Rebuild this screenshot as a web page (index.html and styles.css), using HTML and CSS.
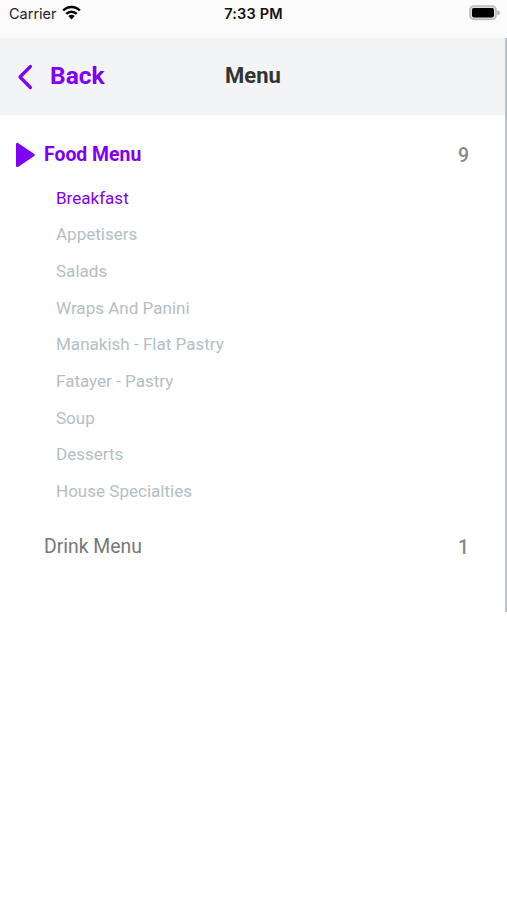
FILE: index.html
```html
<!DOCTYPE html>
<html lang="en">
<head>
<meta charset="utf-8">
<title>Menu</title>
<link rel="stylesheet" href="styles.css">
</head>
<body>
<div class="status">
  <div class="carrier"><span>Carrier</span>
    <svg class="wifi" width="19" height="15" viewBox="0 0 19 15" fill="none" stroke="#000" stroke-width="2.5"><path d="M1.2 5.5C5.8.8 13.2.8 17.8 5.5M4.3 8.8c2.9-2.9 7.5-2.9 10.4 0"/><path d="M6.3 11.1Q9.5 8.5 12.7 11.1L9.5 14.4Z" fill="#000" stroke="none"/></svg>
  </div>
  <span class="time">7:33 PM</span>
  <svg class="battery" width="32" height="16" viewBox="0 0 32 16"><rect x="1" y="1" width="26" height="13.4" rx="4" fill="#ddd" stroke="#bbb" stroke-width="1.6"/><rect x="3" y="3" width="22" height="9.4" rx="1.8"/><path d="M28.4 5.2Q31 6.2 31 7.7T28.4 10.2Z" fill="#aaa"/></svg>
</div>
<div class="screen">
  <header class="header">
    <div class="back">
      <svg width="16" height="26" viewBox="0 0 16 26" fill="none" stroke="#8000f5" stroke-width="3.2" stroke-linecap="round" stroke-linejoin="round"><path d="M13.4 2.5 3 13 13.4 23.5"/></svg>
      <span>Back</span>
    </div>
    <h1 class="title">Menu</h1>
  </header>
  <main>
    <div class="section active">
      <svg class="marker" width="20" height="26" viewBox="0 0 20 26"><path d="M2.3 2.2v21.6L18.5 13Z" fill="#8000f5" stroke="#8000f5" stroke-width="2.6" stroke-linejoin="round"/></svg>
      <span class="name">Food Menu</span><span class="count">9</span>
    </div>
    <ul class="items">
      <li class="current"><span>Breakfast</span></li>
      <li><span>Appetisers</span></li>
      <li><span>Salads</span></li>
      <li><span>Wraps And Panini</span></li>
      <li><span>Manakish - Flat Pastry</span></li>
      <li><span>Fatayer - Pastry</span></li>
      <li><span>Soup</span></li>
      <li><span>Desserts</span></li>
      <li><span>House Specialties</span></li>
    </ul>
    <div class="section">
      <span class="name">Drink Menu</span><span class="count">1</span>
    </div>
  </main>
</div>
</body>
</html>
```
FILE: styles.css
```css
* { box-sizing: border-box; }
body { margin: 0; height: 900px; overflow: hidden; background: #fff; font-family: Roboto, sans-serif; }
.status {
  display: grid; grid-template-columns: 1fr auto 1fr; align-items: center;
  height: 38px; padding: 0 6px 11px 8px; background: #fbfbfb;
  font-family: Inter, sans-serif; color: #222;
}
.carrier { display: flex; align-items: center; gap: 5px; padding-left: 1px; font-size: 14.5px; }
.wifi { margin-top: -3px; }
.time { margin-left: -2px; font-size: 14.5px; font-weight: 600; letter-spacing: 0.2px; color: #111; }
.battery { justify-self: end; margin-top: -1px; }
.screen { height: 574px; border-right: 2px solid #b9c2cf; }
.header {
  display: grid; grid-template-columns: 1fr auto 1fr; align-items: center;
  height: 77px; padding-left: 17px; padding-right: 16px; background: #f2f4f6;
}
.back { display: flex; align-items: center; gap: 17px; color: #8000f5; font-size: 24.5px; font-weight: 700; }
.back span { margin-top: -2px; }
.title { margin: -2px 0 0; font-size: 22px; font-weight: 700; color: #333; }
.section {
  display: flex; align-items: center; height: 38px; padding: 0 36px 0 44px;
  font-size: 19.4px; color: #777;
}
.active { height: 45px; margin-top: 17px; padding-left: 15px; }
.active .name { color: #8000f5; font-weight: 700; }
.marker { margin-right: 9px; }
.count { margin: 2px 0 0 auto; font-weight: 500; color: #888; }
.items { margin: 2.5px 0 18.5px; padding: 0 0 0 56px; list-style: none; font-size: 17.05px; color: #b4c0c4; }
.items li { display: flex; align-items: center; height: 36.65px; }
.items .current { color: #8000f5; }
```
